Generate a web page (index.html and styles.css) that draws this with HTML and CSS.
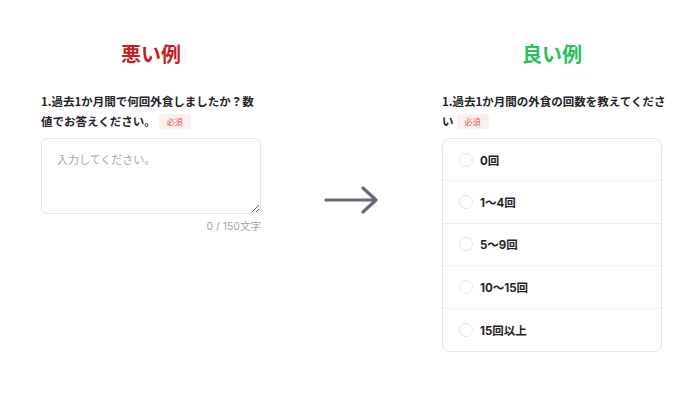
FILE: index.html
```html
<!DOCTYPE html>
<html lang="ja">
<head>
  <meta charset="UTF-8" />
  <meta name="viewport" content="width=device-width, initial-scale=1.0"/>
  <title>悪い例と良い例</title>
  <link rel="stylesheet" href="styles.css">
</head>
<body>
  <div class="compare">
    <section class="example">
      <h2 class="title bad">悪い例</h2>
      <p class="question">1.過去1か月間で何回外食しましたか？数<br>値でお答えください。<span class="badge">必須</span></p>
      <textarea class="answer" placeholder="入力してください。"></textarea>
      <div class="counter">0 / 150文字</div>
    </section>

    <div class="arrow">
      <svg width="56" height="30" viewBox="0 0 56 30" fill="none" stroke="#656b75" stroke-width="3.2" stroke-linecap="round" stroke-linejoin="round">
        <line x1="2" y1="15" x2="51" y2="15" />
        <polyline points="39,3 52,15 39,27" />
      </svg>
    </div>

    <section class="example">
      <h2 class="title good">良い例</h2>
      <p class="question">1.過去1か月間の外食の回数を教えてくださ<br>い<span class="badge">必須</span></p>
      <div class="options">
        <label class="option"><span class="radio"></span>0回</label>
        <label class="option"><span class="radio"></span>1〜4回</label>
        <label class="option"><span class="radio"></span>5〜9回</label>
        <label class="option"><span class="radio"></span>10〜15回</label>
        <label class="option"><span class="radio"></span>15回以上</label>
      </div>
    </section>
  </div>
</body>
</html>
```

FILE: styles.css
```css
* {
  margin: 0;
  padding: 0;
  box-sizing: border-box;
}

body {
  font-family: "Noto Sans CJK JP", sans-serif;
  background: #ffffff;
  color: #1f2328;
}

.compare {
  display: flex;
  align-items: flex-start;
  padding: 39px 0 0 41px;
}

.example {
  width: 220px;
}

.title {
  text-align: center;
  font-size: 20px;
  line-height: 30px;
  font-weight: bold;
  margin-bottom: 22px;
}

.title.bad {
  color: #c41e26;
}

.title.good {
  color: #25c25a;
}

.question {
  font-size: 11.5px;
  line-height: 20px;
  font-weight: bold;
  white-space: nowrap;
  margin-bottom: 7px;
}

.badge {
  display: inline-block;
  margin-left: 3px;
  padding: 0 8px;
  font-size: 8px;
  line-height: 15px;
  font-weight: normal;
  color: #e0585a;
  background: #fdeeee;
  border-radius: 3px;
  vertical-align: 1px;
}

.answer {
  display: block;
  width: 220px;
  height: 76px;
  padding: 12px 15px;
  font-family: inherit;
  font-size: 11px;
  border: 1px solid #e6e7ea;
  border-radius: 6px;
  resize: vertical;
  outline: none;
}

.answer::placeholder {
  color: #a2a7b0;
}

.counter {
  text-align: right;
  font-family: "Inter", "Noto Sans CJK JP", sans-serif;
  font-size: 10.5px;
  line-height: 14px;
  margin-top: 6px;
  color: #a2a7b0;
}

.arrow {
  width: 181px;
  margin-top: 146px;
  display: flex;
  justify-content: center;
}

.options {
  border: 1px solid #e6e7ea;
  border-radius: 8px;
}

.option {
  display: flex;
  align-items: center;
  height: 42.4px;
  padding-left: 16px;
  font-family: "Inter", "Noto Sans CJK JP", sans-serif;
  font-size: 11.5px;
  font-weight: bold;
  border-bottom: 1px solid #eceef0;
}

.option:last-child {
  border-bottom: none;
}

.radio {
  width: 14px;
  height: 14px;
  margin-right: 7px;
  border: 1px solid #e6e7ea;
  border-radius: 50%;
}
```
